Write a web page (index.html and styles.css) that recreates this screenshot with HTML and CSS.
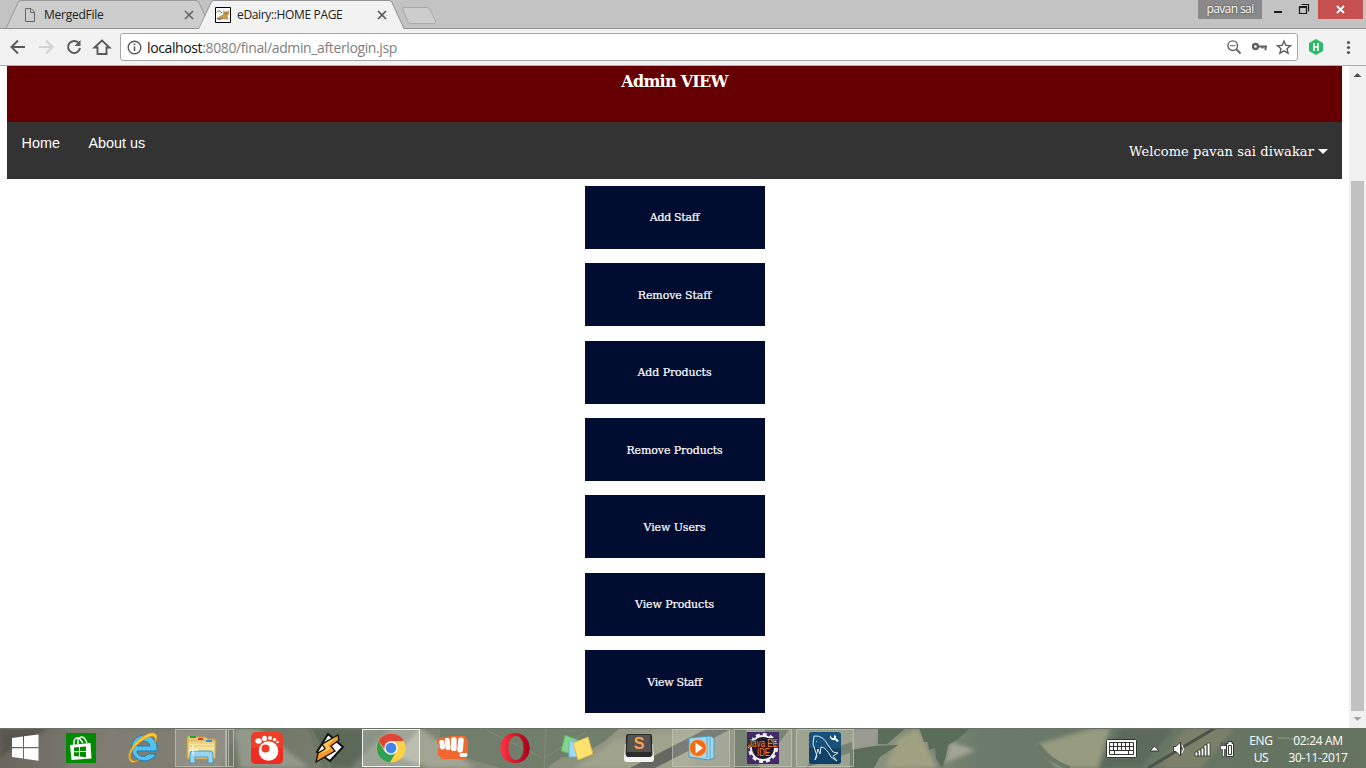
FILE: index.html
```html
<!DOCTYPE html>
<html lang="en">
<head>
<meta charset="utf-8">
<title>eDairy::HOME PAGE</title>
<link rel="stylesheet" href="styles.css">
</head>
<body>
<header class="tabs">
  <svg class="tab-shapes" width="1366" height="29" viewBox="0 0 1366 29">
    <path d="M0 28.5H6L18 2.5Q19 .5 21 .5H196Q198 .5 199 2.5L211 28.5" fill="#cdcdcd" stroke="#999"/>
    <path d="M0 28.5H199L211 2.5Q212 .5 214 .5H389Q391 .5 392 2.5L404 28.5H1366" fill="none" stroke="#929292"/>
    <path d="M199 29L211.500 3Q212.500 1 214 1H389Q391 1 391.500 3L403.500 29Z" fill="#f2f2f2"/>
    <path d="M404 7.500H427Q429 7.500 430 9.500L436 22Q436 23.500 434 23.500H411Q409 23.500 408 21.500L402.500 9Q402 7.500 404 7.500Z" fill="#cdcdcd" stroke="#aaa"/>
  </svg>
  <div class="tab">
    <svg class="favicon" width="16" height="16" viewBox="0 0 16 16" fill="none" stroke="#666"><path d="M3.500 1.500H9L12.500 5V14.500H3.500ZM8.500 1.500V5.500H12.500"/></svg>
    <span class="tab-title merged">MergedFile</span>
    <svg class="tab-close" width="10" height="10" viewBox="0 0 10 10" stroke="#666" stroke-width="1.700"><path d="M1 1L9 9M9 1L1 9"/></svg>
  </div>
  <div class="tab">
    <svg class="favicon" width="16" height="16" viewBox="0 0 16 16"><path d="M.5.5H15.500V15.500H.5Z" fill="#fff" stroke="#000"/><path d="M1.500 12.500L4 9.500L8 7.500L8.500 3L10 4.500H12L14 3V7L12.500 9L13.500 12.500H10L7 11.500L5 13Z" fill="#c59a51"/><path d="M1.500 5.500L4 3.500L7 6M2 11L5 12.500L8 11M10 6L12 6.500" stroke="#6b6455" fill="none"/></svg>
    <span class="tab-title edairy">eDairy::HOME PAGE</span>
    <svg class="tab-close" width="10" height="10" viewBox="0 0 10 10" stroke="#555" stroke-width="1.700"><path d="M1 1L9 9M9 1L1 9"/></svg>
  </div>
  <div class="window-controls">
    <span class="profile">pavan sai</span>
    <svg width="56" height="19" viewBox="0 0 56 19" fill="none" stroke="#1b1b1b"><path d="M12 12H20" stroke-width="2"/><path d="M37.500 6.500H44.500V13.500H37.500ZM37 7.500H45M39.500 4.500H46.500V11.500" stroke-width="1.200"/></svg>
    <span class="window-close"><svg width="9" height="9" viewBox="0 0 9 9" stroke="#fff" stroke-width="1.800"><path d="M1 1L8 8M8 1L1 8"/></svg></span>
  </div>
</header>
<div class="toolbar">
  <svg width="112" height="36" viewBox="0 0 112 36" fill="none" stroke="#5a5a5a" stroke-width="2"><path d="M25 18H12M18 11.500L11.500 18L18 24.500"/><path d="M39 18H52M46 11.500L52.500 18L46 24.500" stroke="#d2d2d2"/><path d="M79 14.500A6 6 0 1 0 80 19"/><path d="M80.500 11V17H74.500Z" fill="#5a5a5a" stroke="none"/><path d="M94.500 18.500L102 11.500L109.500 18.500H106.500V25H97.500V18.500Z" stroke-width="1.900"/></svg>
  <div class="address">
    <svg width="15" height="15" viewBox="0 0 15 15" fill="none" stroke="#5a5a5a"><circle cx="7.500" cy="7.500" r="6.300" stroke-width="1.400"/><path d="M7.500 6.500V11M7.500 3.500V5.200" stroke-width="1.600"/></svg>
    <span class="url"><b>localhost</b>:8080/final/admin_afterlogin.jsp</span>
    <svg class="address-icons" width="68" height="20" viewBox="0 0 68 20" fill="none" stroke="#606060"><circle cx="6.700" cy="8.700" r="4.800" stroke-width="1.400"/><path d="M10 12L14.500 16.500" stroke-width="1.800"/><path d="M4 8.700H9.500"/><circle cx="29.500" cy="9.500" r="2.500" stroke-width="2.300"/><path d="M32 9.500H41M39.500 9V13.200M36.500 9V11.500" stroke-width="2"/><path d="M58 4L59.800 8.300L64.500 8.700L61 11.700L62.100 16.200L58 13.800L53.900 16.200L55 11.700L51.500 8.700L56.200 8.300Z" stroke-width="1.400"/></svg>
  </div>
  <svg class="extensions" width="68" height="36" viewBox="0 0 68 36"><path d="M18 10L25 14V22L18 26L11 22V14Z" fill="#28bd65"/><path d="M16 14V22M20 14V22M16 18H20" stroke="#fff" stroke-width="1.700"/><g fill="#555"><circle cx="50.500" cy="13.500" r="1.600"/><circle cx="50.500" cy="18.500" r="1.600"/><circle cx="50.500" cy="23.500" r="1.600"/></g></svg>
</div>
<main class="viewport">
  <div class="page">
    <h1 class="banner"><span>Admin VIEW</span></h1>
    <nav class="nav"><a class="home">Home</a><a class="about">About us</a><a class="welcome"><span>Welcome pavan sai diwakar</span><i class="caret"></i></a></nav>
    <div class="actions">
      <a class="action"><span>Add Staff</span></a>
      <a class="action"><span>Remove Staff</span></a>
      <a class="action"><span>Add Products</span></a>
      <a class="action"><span>Remove Products</span></a>
      <a class="action"><span>View Users</span></a>
      <a class="action"><span>View Products</span></a>
      <a class="action"><span>View Staff</span></a>
    </div>
  </div>
  <aside class="scrollbar">
    <svg width="17" height="17" viewBox="0 0 17 17"><path d="M4.500 11L8.500 7L12.500 11Z" fill="#505050"/></svg>
    <i class="thumb"></i>
    <svg width="17" height="17" viewBox="0 0 17 17"><path d="M4.500 6L8.500 10L12.500 6Z" fill="#a3a3a3"/></svg>
  </aside>
</main>
<footer class="taskbar">
  <svg class="wallpaper" width="1366" height="40" viewBox="0 0 1366 40" preserveAspectRatio="none">
    <defs>
      <linearGradient id="base"><stop offset="0" stop-color="#69665d"/><stop offset=".08" stop-color="#7f7d74"/><stop offset=".17" stop-color="#6f7667"/><stop offset=".31" stop-color="#7d8474"/><stop offset=".5" stop-color="#999c88"/><stop offset=".64" stop-color="#8b927e"/><stop offset=".72" stop-color="#6b7a6b"/><stop offset="1" stop-color="#64735f"/></linearGradient>
      <filter id="soft"><feGaussianBlur stdDeviation="2"/></filter>
    </defs>
    <path d="M0 0H1366V40H0Z" fill="url(#base)"/>
    <g filter="url(#soft)">
      <path d="M0 0H50L10 22L0 30Z" fill="#58564f"/><path d="M60 40L135 4L240 0L220 40Z" fill="#807e73"/>
      <path d="M234 0H258L310 40H240Z" fill="#92988a"/><path d="M310 0H390L350 40H325Z" fill="#5c6959"/>
      <path d="M420 0L475 40H430L395 28Z" fill="#a2a593"/><path d="M575 40L615 12L700 0L690 40Z" fill="#a0a38b"/>
      <path d="M855 0H880L876 18L850 22Z" fill="#9b9b94"/><path d="M884 40L899 10L918 0L937 40Z" fill="#a0a083"/>
      <path d="M945 35L950 14L976 22Z" fill="#a3a596"/><path d="M1038 16L1094 0H1110L1098 40H1057Z" fill="#979b80"/>
      <path d="M1158 40L1185 0H1235L1200 40Z" fill="#7c8069"/><path d="M1098 40L1120 0H1175L1140 40Z" fill="#5b6a5c"/>
    </g>
    <path d="M440 0H620L605 13L580 28L562 29L547 40H500L440 22Z" fill="#707e6b"/>
    <path d="M546 0L544 40M544 30L586 4M543 30L486 2" stroke="#828d79"/>
    <path d="M630 40L708 0H733L655 40Z" fill="#666861"/>
    <path d="M734 0H745L760 40H735ZM765 0H790L780 14L765 20ZM815 26L852 14V24L806 40Z" fill="#65705f"/>
    <path d="M919 0L924 14H928L929 22L935 20L936 30L942 40L946 28L948 17L958 11L970 0Z" fill="#5a6c5a"/>
    <path d="M850 22L874 18L898 17L880 29L874 40H850ZM878 0H906L887 16H878Z" fill="#5d6d5b"/>
    <path d="M1038 17Q1050 34 1070 40M310 0L330 40" fill="none" stroke="#6a7865" stroke-width="4"/>
    <path d="M1148 40L1215 0" stroke="#4a524a" stroke-width="3"/><path d="M1278 10Q1300 10 1320 16" fill="none" stroke="#7f8974" stroke-width="2"/>
    <path d="M0 .5H1366" stroke="#697165"/>
  </svg>
  <div class="start"><svg width="28" height="28" viewBox="0 0 28 28" fill="#fff"><path d="M1 4L12 2.500V13H1ZM13 2.200L27.500 .5V13H13ZM1 14.200H12V24.500L1 23ZM13 14.200H27.500V26.700L13 24.700Z"/></svg></div>
  <div class="app store"><svg width="30" height="30" viewBox="0 0 30 30"><path d="M0 0H30V30H0Z" fill="#008a00"/><path d="M4 12L24.500 10L25.500 25.500L5.500 27Z" fill="#fff"/><path d="M8 12V8Q10 3 14 6L17 10M12 11V6Q16 2 19 6L21 10" fill="none" stroke="#fff" stroke-width="1.400"/><path d="M8 14.500L13 14V18.200H8ZM14 13.900L20 13.400V18H14ZM8 19.200H13V23.500L8 23ZM14 19H20V24.200L14 23.600Z" fill="#008a00"/></svg></div>
  <div class="app"><svg width="32" height="32" viewBox="0 0 32 32"><path d="M16 3A13 13 0 1 0 29 22H21C18 26 10 25 10 19H30C31 9 25 3 16 3ZM10 14C10 8 22 7 23 14Z" fill="#55c1ef" stroke="#187fb8"/><path d="M3 29C-5 17 26-8 30 4Q30 9 28 11Q30 0 18 7C4 15-1 28 7 29Q10 29 13 27Q6 33 3 29Z" fill="#ffc832" stroke="#c48b20" stroke-width=".7"/></svg></div>
  <div class="app group"><span class="task-frame explorer"><svg width="34" height="32" viewBox="0 0 34 32"><path d="M3 27V6Q3 4 5 4H12L14 5H22L24 7H31Q32 8 32 10L31 27Z" fill="#e8c76d" stroke="#b99640"/><path d="M4 9H31V26H4Z" fill="#f7e29a" stroke="#d1b25d"/><path d="M5 11H30M6 14H30" stroke="#e2c677"/><path d="M6 5H12" stroke="#18aa38" stroke-width="2"/><path d="M14 7H19" stroke="#d3432a" stroke-width="2"/><path d="M22 9H28" stroke="#2e91d2" stroke-width="2"/><path d="M6 31V22Q6 19 9 19H26Q29 19 29 22V31H24V25H11V31Z" fill="#9bd4f2" stroke="#4997c0"/><path d="M9 13V23M5 18H14" stroke="#fff"/></svg></span><i class="stack"></i></div>
  <div class="app"><svg width="32" height="32" viewBox="0 0 32 32"><rect width="32" height="32" rx="5" fill="#ef3e27"/><path d="M0 16H32V27Q32 32 27 32H5Q0 32 0 27Z" fill="#ef2c24"/><g fill="#fff"><circle cx="17.500" cy="19" r="9.800"/><ellipse cx="7.500" cy="9" rx="3.200" ry="2.800"/><ellipse cx="13.500" cy="6.500" rx="2.400" ry="2.700"/><circle cx="19" cy="6" r="2"/><circle cx="23.500" cy="7.500" r="1.700"/><circle cx="26.500" cy="10" r="1.300"/></g><circle cx="14.500" cy="16.500" r="4" fill="#ef3e27"/></svg></div>
  <div class="app"><svg width="32" height="32" viewBox="0 0 32 32"><path d="M15 2L30 15L17 29L4 20Z" fill="#fff" stroke="#111" stroke-width="2"/><path d="M25 3L9 12L12 17L5 21L3 30L22 19L18 14L26 8Z" fill="#f49b27" stroke="#111" stroke-width="1.300"/><path d="M23 5L11 12.500L14 16L7 22L17 17L15 13Z" fill="#ffc866"/></svg></div>
  <div class="app"><span class="task-frame active"><svg width="30" height="30" viewBox="0 0 30 30"><circle cx="15" cy="15" r="14.500" fill="#fdd249"/><path d="M2.500 8A14.500 14.500 0 0 1 28 8H15L10 18Z" fill="#de4738"/><path d="M2.500 8A14.500 14.500 0 0 0 14 29.500L20 19H9Z" fill="#30a152"/><circle cx="15" cy="15" r="6.700" fill="#fff"/><circle cx="15" cy="15" r="5.400" fill="#4285e8"/></svg></span></div>
  <div class="app"><svg width="32" height="24" viewBox="0 0 32 24"><path d="M2 2L8 1L15 0H28L31 5V16L29 23H5L1 19V13L3 11L0 7Z" fill="#f0682d"/><g fill="#fff"><rect x="2.500" y="4" width="5" height="9.500" rx="2.400" transform="rotate(-10 5 8)"/><rect x="8" y="2" width="5.200" height="12" rx="2.500" transform="rotate(-6 10 8)"/><rect x="14" y="1" width="5.600" height="14" rx="2.600"/><rect x="20.800" y="1.500" width="5.600" height="15" rx="2.600" transform="rotate(5 23 8)"/><rect x="22.500" y="17" width="8" height="4" rx="2"/></g></svg></div>
  <div class="app"><svg width="30" height="30" viewBox="0 0 30 30"><defs><linearGradient id="opera"><stop stop-color="#ff3443"/><stop offset="1" stop-color="#a70014"/></linearGradient></defs><path fill-rule="evenodd" d="M15 0C34 0 35 30 15 30S-4 0 15 0ZM16 3C6 3 6 27 16 27S26 3 16 3Z" fill="url(#opera)"/></svg></div>
  <div class="app"><svg width="32" height="30" viewBox="0 0 32 30"><path d="M4 2L17 7L13 22L0 18Z" fill="#83d587" stroke="#5bae67"/><path d="M8 8H22V24H8Z" fill="#9dd9fa" stroke="#6fadd1"/><path d="M12 10L27 4L32 21L17 27Z" fill="#ffe36e" stroke="#d7b84d"/></svg></div>
  <div class="app"><svg width="32" height="32" viewBox="0 0 32 32"><path d="M2 12H30L31 27Q31 30 28 30H4Q1 30 1 27Z" fill="#f4f4f2"/><path d="M3 4Q3 2 5 2H27Q29 2 29 4L29.500 22Q29 25 27 25H5Q3 25 2.500 22Z" fill="#2c2c2c"/><path d="M5 3H27L28 20H4Z" fill="#545454"/><text class="sublime" x="16" y="17" text-anchor="middle">S</text></svg></div>
  <div class="app"><span class="task-frame"><svg width="28" height="28" viewBox="0 0 28 28"><path d="M2 4L23 2L27 4V24L22 26L2 23Z" fill="#9cd8ef" stroke="#4a9bbb"/><path d="M20 3V24M23 3V25" stroke="#62acc8"/><circle cx="11" cy="14" r="8.500" fill="#f26c13" stroke="#ffb579"/><path d="M8.500 8.500L16 14L8.500 19.500Z" fill="#fff"/></svg></span></div>
  <div class="app"><span class="task-frame"><svg class="eclipse-icon" width="32" height="32" viewBox="0 0 32 32"><path d="M0 0H32V32H0Z" fill="#432966"/><circle cx="16" cy="16" r="13.500" fill="none" stroke="#eee" stroke-width="3" stroke-dasharray="4 3"/><circle cx="16" cy="16" r="12" fill="#201929" stroke="#eee" stroke-width="2"/><g class="eclipse"><text x="1" y="15" textLength="30" lengthAdjust="spacingAndGlyphs">Java EE</text><text x="10" y="24" textLength="13" lengthAdjust="spacingAndGlyphs">IDE</text></g></svg></span></div>
  <div class="app"><span class="task-frame"><svg width="32" height="32" viewBox="0 0 32 32"><rect width="32" height="32" rx="3" fill="#17527d"/><path d="M0 16H32V30L30 32H2L0 30Z" fill="#104268"/><path d="M6 28L8 24L4 12L5 4Q14 3 19 13L24 20L29 21L24 24L28 29L22 25Q17 15 12 15L11 22L9 17L6 28M7 9L8 10" fill="none" stroke="#dceaf3"/><path d="M21 3V6L23 8L26 8L28 10L30 9L27 6V4L25 3V6H23Z" fill="#f0f5f8"/></svg></span></div>
  <div class="tray">
    <svg width="135" height="40" viewBox="0 0 135 40" fill="#fff" stroke="#30372f"><rect x=".5" y="11.500" width="30" height="18" rx="1" fill="#fff"/><path d="M3.500 14.500H27.500V26.500H3.500Z" fill="#fff"/><path d="M4 18.500H27M4 22.500H27M7.500 15V22M11.500 15V22M15.500 15V22M19.500 15V22M23.500 15V22M8.500 23V26M22.500 23V26"/><path d="M44 23L48.500 18L53 23Z"/><path d="M67.500 18.500H70L74.500 14V28L70 23.500H67.500Z"/><path d="M76 17Q79 21 76 25" fill="none" stroke="#fff"/><path d="M89 24H92V28H89ZM92 22H95V28H92ZM95 20H98V28H95ZM98 17H101V28H98ZM101 15H104V28H101Z" stroke-width=".8"/><path d="M114.500 17.500H120.500V21.500H118.500V28.500H116.500V21.500H114.500ZM115.500 14.500H116.500V17.500H115.500ZM118.500 14.500H119.500V17.500H118.500Z" stroke-width=".7"/><path d="M120.500 15.500H122V13.500H126V15.500H127.500V28.500H120.500Z"/><path d="M122.500 17.500H125.500V26.500H122.500Z"/></svg>
    <div class="lang"><span>ENG</span><span>US</span></div>
    <div class="clock"><span class="time">02:24 AM</span><span class="date">30-11-2017</span></div>
  </div>
</footer>
</body>
</html>
```
FILE: styles.css
```css
* { box-sizing: border-box; }
body { margin: 0; width: 1366px; height: 768px; overflow: hidden; display: flex; flex-direction: column; background: #fff; font-family: "Open Sans", "Noto Sans", sans-serif; }
svg { display: block; flex: none; }

.tabs { position: relative; flex: none; height: 29px; display: flex; background: #c3c3c3; padding-left: 22px; }
.tab-shapes { position: absolute; left: 0; top: 0; }
.tab { position: relative; width: 193px; height: 29px; display: flex; align-items: center; padding: 1px 21px 0 0; font-size: 12px; color: #222; white-space: nowrap; }
.tab .favicon { margin-right: 6px; }
.tab .tab-close { margin-left: auto; }
.tab-title { color: #222; margin-top: -1px; }
.merged { letter-spacing: -.25px; }
.edairy { letter-spacing: -.35px; }
.window-controls { position: relative; margin-left: auto; display: flex; height: 19px; padding-right: 3px; }
.profile { width: 64px; background: #8a8a8a; color: #fff; font-size: 12px; line-height: 18px; letter-spacing: -.6px; text-align: center; text-shadow: 0 0 2px #333; }
.window-close { width: 45px; background: #c75050; display: flex; align-items: center; justify-content: center; }

.toolbar { flex: none; height: 37px; display: flex; align-items: flex-start; background: #f2f2f2; border-bottom: 1px solid #aeacae; }
.address { margin: 4px 0 0 8px; width: 1178px; height: 28px; border: 1px solid #a6a6a6; border-radius: 3px; background: #fff; display: flex; align-items: center; padding: 0 3px 0 6px; }
.url { margin-left: 5px; font-size: 14px; letter-spacing: -.38px; color: #808080; }
.url b { color: #111; font-weight: 400; }
.address-icons { margin-left: auto; }

.viewport { flex: none; height: 662px; display: flex; }
.page { flex: 1; padding: 0 7px; font-family: "DejaVu Serif", serif; color: #fff; }
.banner { margin: 0; height: 56px; background: #600; text-align: center; font-size: 16px; line-height: 31px; letter-spacing: -.75px; font-weight: 700; }
.nav { height: 57px; display: flex; background: #333; padding: 11px 14px 0 14.5px; font: 14.4px/21px "Liberation Sans", sans-serif; }
.about { margin-left: 28.600px; }
.welcome { margin-left: auto; padding-top: 8px; display: flex; align-items: center; height: 28px; font-family: "DejaVu Serif", serif; font-size: 13px; letter-spacing: .08px; }
.caret { margin-left: 4px; border: 5px solid transparent; border-top-color: #fff; border-bottom: 0; }
.actions { padding-top: 7px; display: flex; flex-direction: column; align-items: center; gap: 14.350px; }
.action { width: 180px; height: 63px; padding-top: 1px; background: #000c30; display: flex; align-items: center; justify-content: center; font-size: 11px; letter-spacing: -.1px; -webkit-text-stroke: .2px #fff; }
.action:first-child { padding-top: 0; letter-spacing: -.3px; }
.action:last-child { letter-spacing: -.3px; }
.scrollbar { flex: none; width: 17px; background: #f1f1f1; display: flex; flex-direction: column; align-items: center; }
.thumb { width: 13px; height: 530px; margin-top: auto; background: #c1c1c1; }

.taskbar { position: relative; flex: none; height: 40px; display: flex; background: #69745f; }
.wallpaper { position: absolute; left: 0; top: 0; }
.start { position: relative; width: 50px; display: flex; align-items: center; justify-content: center; }
.app { position: relative; width: 62px; display: flex; align-items: center; justify-content: center; }
.task-frame { width: 58px; height: 38px; border: 1px solid #c4c8b9aa; background: #ffffff22; display: flex; align-items: center; justify-content: center; }
.active { border-color: #f0f1ed; background: #ffffff48; }
.group { justify-content: flex-start; padding-left: 1px; }
.explorer { width: 51px; }
.stack { width: 8px; height: 38px; border: 1px solid #aeb2a7; border-left: 3px double #aeb2a7; }
.taskbar text { font-family: "Liberation Sans", sans-serif; }
.sublime { font-size: 16px; font-weight: 700; fill: #ffa04c; }
.eclipse-icon { overflow: visible; }
.eclipse { font-size: 10px; fill: #ff861b; stroke: #201929; stroke-width: 1.5px; paint-order: stroke; }
.tray { position: relative; margin-left: auto; width: 260px; display: flex; color: #fff; font-size: 12px; line-height: 17px; text-align: center; letter-spacing: -.35px; }
.lang { width: 40px; display: flex; flex-direction: column; padding-top: 4px; }
.clock { width: 74px; display: flex; flex-direction: column; padding-top: 4px; white-space: nowrap; }
```
